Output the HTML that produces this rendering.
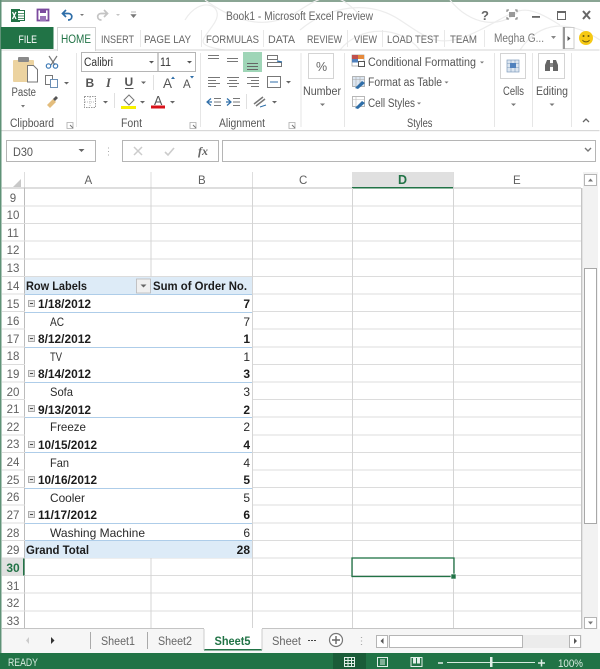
<!DOCTYPE html>
<html><head><meta charset="utf-8"><style>
html,body{margin:0;padding:0;background:#fff;width:600px;height:669px;overflow:hidden}
svg{display:block;filter:blur(.3px)}
text{font-family:"Liberation Sans",sans-serif;font-size:11.5px;fill:#555}
.r{fill:#606060;font-size:11.5px}
.c{font-size:12px;fill:#2a2a2a}
.b{font-weight:bold;fill:#1c1c1c;font-size:12px}
.t{font-size:11px;fill:#666}
.s{font-size:11.5px;fill:#666}
.g{font-size:11.5px;fill:#555}
</style></head><body>
<svg width="600" height="669" viewBox="0 0 600 669" xmlns="http://www.w3.org/2000/svg">
<rect width="600" height="669" fill="#fff"/>
<!-- window border -->
<rect x="0" y="0" width="600" height="2" fill="#8aa594"/>
<rect x="0" y="0" width="1.5" height="669" fill="#5f9277"/>
<!-- swirl decoration -->
<g fill="none" stroke="#ececec" stroke-width="1.2">
<path d="M185 20C200 -5 225 5 215 22S190 45 225 50"/>
<path d="M205 0C240 25 270 30 300 10S340 -5 360 15"/>
<path d="M300 30C330 5 370 0 400 20S440 50 480 30S520 0 560 25"/>
<path d="M340 50C360 25 400 25 420 50"/>
<path d="M450 0C470 25 500 30 520 10"/>
<path d="M520 50C540 20 570 20 600 40"/>
</g>
<!-- QAT -->
<rect x="11" y="9" width="9" height="13" fill="#217346"/>
<rect x="17.500" y="10.500" width="7" height="10" fill="#fff" stroke="#217346"/>
<path d="M12.500 12l3.500 7M16 12l-3.500 7" stroke="#fff" stroke-width="1.300"/>
<path d="M18 13.500h6M18 16h6M18 18.500h6" stroke="#217346" stroke-width=".8"/>
<rect x="37.500" y="9.500" width="11" height="11" fill="#fff" stroke="#7b4a9e" stroke-width="1.800"/>
<rect x="40" y="9" width="6" height="4" fill="#7b4a9e"/>
<rect x="40" y="16" width="6" height="5" fill="#9a73b8"/>
<path d="M66 10l-3.500 3.500 3.500 3.500M62.500 13.500h6c4.500 0 4.500 6.500 -.5 6.500" fill="none" stroke="#2f6ea8" stroke-width="1.700"/>
<path d="M80 14h4l-2 2z" fill="#777"/>
<path d="M104 10l3.500 3.500-3.500 3.500M107 13.500h-6c-4.500 0-4.500 6.500 .5 6.500" fill="none" stroke="#c4c4c4" stroke-width="1.700"/>
<path d="M116 14h4l-2 2z" fill="#c4c4c4"/>
<path d="M131 12h5M131 14.500h5l-2.500 3z" fill="#777" stroke="#777" stroke-width=".6"/>
<text x="226" y="20" textLength="147" lengthAdjust="spacingAndGlyphs" style="font-size:11.5px;fill:#666">Book1 - Microsoft Excel Preview</text>
<!-- window controls -->
<text x="481" y="20" style="font-size:13px;font-weight:bold;fill:#666">?</text>
<path d="M507 12v-2h2M515 10h2v2M517 17v2h-2M509 19h-2v-2" fill="none" stroke="#777"/><rect x="509" y="12" width="6" height="5" fill="#999"/>
<rect x="532" y="16" width="8" height="1.800" fill="#666"/>
<rect x="557.500" y="11.500" width="8" height="8" fill="#fff" stroke="#666"/><rect x="557" y="11" width="9" height="2" fill="#666"/>
<path d="M583 11l7 8M590 11l-7 8" stroke="#666" stroke-width="2"/>
<!-- tabs -->
<rect x="1" y="27" width="52.500" height="22" fill="#217346"/>
<text x="18.500" y="43" textLength="18.500" lengthAdjust="spacingAndGlyphs" style="fill:#fff;font-size:11px">FILE</text>
<rect x="57.500" y="27.500" width="38" height="23" fill="#fff" stroke="#d4d4d4"/>
<text x="61" y="43" textLength="30" lengthAdjust="spacingAndGlyphs" style="fill:#217346;font-size:11.500px">HOME</text>
<text x="101" y="43" textLength="33" lengthAdjust="spacingAndGlyphs" class="t">INSERT</text>
<text x="144" y="43" textLength="47" lengthAdjust="spacingAndGlyphs" class="t">PAGE LAY</text>
<text x="206" y="43" textLength="53" lengthAdjust="spacingAndGlyphs" class="t">FORMULAS</text>
<text x="268" y="43" textLength="27" lengthAdjust="spacingAndGlyphs" class="t">DATA</text>
<text x="307" y="43" textLength="35" lengthAdjust="spacingAndGlyphs" class="t">REVIEW</text>
<text x="354" y="43" textLength="23" lengthAdjust="spacingAndGlyphs" class="t">VIEW</text>
<text x="387" y="43" textLength="52" lengthAdjust="spacingAndGlyphs" class="t">LOAD TEST</text>
<text x="450" y="43" textLength="27" lengthAdjust="spacingAndGlyphs" class="t">TEAM</text>
<text x="494" y="42" textLength="50" lengthAdjust="spacingAndGlyphs" style="font-size:11.5px;fill:#777">Megha G...</text>
<path d="M140.500 30v17M201.500 30v17M263.500 30v17M347.500 30v17M382.500 30v17M444.500 30v17M484.500 30v17" stroke="#e8e8e8"/>
<path d="M551 36h5l-2.500 3z" fill="#888"/>
<rect x="563" y="27.500" width="11" height="21" fill="#fff" stroke="#ccc"/><rect x="563" y="27" width="2" height="22" fill="#999"/>
<path d="M567.500 36l3 2.500-3 2.500z" fill="#555"/>
<circle cx="586" cy="38" r="7" fill="#f6c915"/><circle cx="583.500" cy="36" r="1" fill="#6b5a10"/><circle cx="588.500" cy="36" r="1" fill="#6b5a10"/><path d="M582.500 40c1.500 2.500 5.500 2.500 7 0" fill="none" stroke="#6b5a10" stroke-width=".9"/>
<rect x="1.500" y="49.500" width="598" height="1" fill="#d4d4d4"/>
<rect x="58" y="49" width="37" height="2" fill="#fff"/>
<!-- ribbon separators -->
<path d="M76.500 53v74M200.500 53v74M301 53v74M344.500 53v74M494.500 53v74M532.500 53v74M571.500 53v74" stroke="#e6e6e6"/>
<rect x="1.500" y="130" width="598" height="1.200" fill="#d8d8d8"/>
<!-- Clipboard -->
<rect x="13" y="60" width="21" height="22" fill="#ecd3a0" rx="1"/>
<rect x="18" y="57" width="11" height="5" fill="#8a8a8a" rx="1"/>
<path d="M27.500 65.500h6l4 4v12.500h-10z" fill="#fff" stroke="#777"/>
<text x="11.500" y="96" textLength="24.500" lengthAdjust="spacingAndGlyphs" class="g">Paste</text>
<path d="M21 105h4l-2 2.500z" fill="#777"/>
<path d="M49 56l6 9M57 56l-6 9" stroke="#777" stroke-width="1.200"/><circle cx="48.500" cy="66" r="2.200" fill="none" stroke="#3d7ab5" stroke-width="1.200"/><circle cx="55.500" cy="66" r="2.200" fill="none" stroke="#3d7ab5" stroke-width="1.200"/>
<rect x="45.500" y="75.500" width="7" height="9" fill="#fff" stroke="#777"/><rect x="50.500" y="79.500" width="7" height="8" fill="#fff" stroke="#6b8fb5"/>
<path d="M64 82h5l-2.500 2.500z" fill="#666"/>
<path d="M47 105l6-6 3 3-6 6z" fill="#e3bd7d"/><path d="M53 99l3-3 2 2-3 3z" fill="#555"/>
<text x="10" y="127" textLength="44" lengthAdjust="spacingAndGlyphs" class="g">Clipboard</text>
<path d="M67 122.500h6v6h-6z" fill="none" stroke="#aaa" stroke-width=".8"/><path d="M70 125l3 3" stroke="#777"/>
<!-- Font -->
<rect x="81.500" y="52.500" width="114" height="19" fill="#fff" stroke="#b5b5b5"/>
<path d="M158 53v18" stroke="#999"/>
<text x="84" y="66" textLength="29" lengthAdjust="spacingAndGlyphs" style="font-size:11.5px;fill:#333">Calibri</text>
<path d="M149 61h5l-2.500 2.500z" fill="#555"/>
<text x="160" y="66" textLength="11" lengthAdjust="spacingAndGlyphs" style="font-size:12px;fill:#333">11</text>
<path d="M187 61h5l-2.500 2.500z" fill="#555"/>
<text x="85.500" y="87" style="font-size:12px;font-weight:bold;fill:#555">B</text>
<text x="106" y="87" style="font-size:12.500px;font-style:italic;font-weight:bold;fill:#555;font-family:'Liberation Serif',serif">I</text>
<text x="124.500" y="86" style="font-size:12px;font-weight:bold;fill:#555">U</text><rect x="125" y="88" width="8.500" height="1" fill="#555"/>
<path d="M141 81.500h5l-2.500 2.500z" fill="#666"/>
<path d="M153.500 75v15" stroke="#e0e0e0"/>
<text x="163" y="88" style="font-size:13.500px;fill:#555">A</text><path d="M171 79l2-2.500 2 2.500z" fill="#2f6ea8"/>
<text x="183" y="88" style="font-size:11.500px;fill:#555">A</text><path d="M190 76l2 2.500 2-2.500z" fill="#2f6ea8"/>
<rect x="84.500" y="96.500" width="11" height="11" fill="none" stroke="#999" stroke-dasharray="1.500 1"/><path d="M90 97v10M85 102h10" stroke="#bbb" stroke-dasharray="1 1"/>
<path d="M103 101h5l-2.500 2.500z" fill="#666"/>
<path d="M114.500 93v15" stroke="#e0e0e0"/>
<path d="M124 100l5-5 5 5-5 5z" fill="#fff" stroke="#777"/><rect x="121" y="106" width="15" height="3" fill="#f7f000"/>
<path d="M140 101h5l-2.500 2.500z" fill="#666"/>
<text x="154" y="105" style="font-size:12.500px;fill:#555">A</text><rect x="151" y="105.500" width="14" height="3" fill="#d8121a"/>
<path d="M170 101h5l-2.500 2.500z" fill="#666"/>
<text x="121" y="127" textLength="21" lengthAdjust="spacingAndGlyphs" class="g">Font</text>
<path d="M190 122.500h6v6h-6z" fill="none" stroke="#aaa" stroke-width=".8"/><path d="M193 125l3 3" stroke="#777"/>
<!-- Alignment -->
<path d="M208 55.500h11M208 58.500h11" stroke="#777"/>
<path d="M227 58.500h11M227 61.500h11" stroke="#777"/>
<rect x="243" y="52" width="19" height="20" fill="#9fd5b7"/>
<path d="M247 63.500h11M247 66.500h11M247 69.500h11" stroke="#666"/>
<rect x="267.500" y="55.500" width="10" height="4" fill="#fff" stroke="#777"/><rect x="267.500" y="62.500" width="14" height="4" fill="#fff" stroke="#777"/><path d="M277 61l5 1" stroke="#2f6ea8" stroke-width="1.300"/>
<path d="M208 77.500h12M208 80.500h8M208 83.500h12M208 86.500h8" stroke="#777"/>
<path d="M227 77.500h12M229 80.500h8M227 83.500h12M229 86.500h8" stroke="#777"/>
<path d="M247 77.500h12M251 80.500h8M247 83.500h12M251 86.500h8" stroke="#777"/>
<rect x="267.500" y="76.500" width="13" height="11" fill="#fff" stroke="#777"/><path d="M270 82h8" stroke="#2f6ea8"/>
<path d="M286 81h5l-2.500 2.500z" fill="#666"/>
<path d="M211 98.500l-4 3.500 4 3.500M207 102h5" fill="none" stroke="#2f6ea8" stroke-width="1.200"/><path d="M214 98.500h7M214 102h7M214 105.500h7" stroke="#777"/>
<path d="M227 98.500l4 3.500-4 3.500M231 102h-5" fill="none" stroke="#2f6ea8" stroke-width="1.200"/><path d="M233 98.500h7M233 102h7M233 105.500h7" stroke="#777"/>
<path d="M246.500 94v15" stroke="#e0e0e0"/>
<path d="M254 104l9-7M256 106l9-7" stroke="#777" stroke-width="1.500"/><path d="M260 107l6-2" stroke="#2f6ea8"/>
<path d="M272 101h5l-2.500 2.500z" fill="#666"/>
<text x="219" y="127" textLength="46" lengthAdjust="spacingAndGlyphs" class="g">Alignment</text>
<path d="M289 122.500h6v6h-6z" fill="none" stroke="#aaa" stroke-width=".8"/><path d="M292 125l3 3" stroke="#777"/>
<!-- Number -->
<rect x="308.500" y="53.500" width="25" height="25" fill="#fff" stroke="#d4d4d4"/>
<text x="316" y="71" style="font-size:12.500px;fill:#666">%</text>
<text x="303" y="95" textLength="38" lengthAdjust="spacingAndGlyphs" class="g">Number</text>
<path d="M320 103.500h5l-2.500 2.500z" fill="#777"/>
<!-- Styles -->
<rect x="352" y="55" width="12" height="11" fill="#fff" stroke="#999" stroke-width=".7"/><rect x="352" y="55" width="6" height="4" fill="#c0504d"/><rect x="358" y="55" width="6" height="4" fill="#e68a3c"/><rect x="352" y="59" width="6" height="3.500" fill="#4f81bd"/><rect x="358.500" y="61.500" width="6" height="5" fill="#fff" stroke="#555"/>
<text x="368" y="66" textLength="108" lengthAdjust="spacingAndGlyphs" class="g">Conditional Formatting</text>
<path d="M480 61.500h4l-2 2z" fill="#777"/>
<rect x="352.500" y="76.500" width="12" height="10" fill="#dce6f1" stroke="#999" stroke-width=".7"/><path d="M352 79.500h13M356 77v9M360 77v9" stroke="#aaa" stroke-width=".6"/><path d="M355 88l7-7 3 2-7 6z" fill="#2f6ea8"/>
<text x="368" y="86" textLength="74" lengthAdjust="spacingAndGlyphs" class="g">Format as Table</text>
<path d="M444.500 81.500h4l-2 2z" fill="#777"/>
<rect x="352.500" y="96.500" width="12" height="10" fill="#fff" stroke="#999" stroke-width=".7"/><path d="M352 99.500h13M356 97v9" stroke="#bbb" stroke-width=".6"/><path d="M355 108l7-7 3 2-7 6z" fill="#2f6ea8"/>
<text x="368" y="107" textLength="47" lengthAdjust="spacingAndGlyphs" class="g">Cell Styles</text>
<path d="M417 102.500h4l-2 2z" fill="#777"/>
<text x="407" y="127" textLength="25.500" lengthAdjust="spacingAndGlyphs" class="g">Styles</text>
<!-- Cells -->
<rect x="500.500" y="53.500" width="25" height="25" fill="#fff" stroke="#d4d4d4"/>
<rect x="507" y="60" width="12" height="12" fill="#dce6f1" stroke="#7f9cbc" stroke-width=".7"/><path d="M507 63.500h12M507 67.500h12M511 60v12M515 60v12" stroke="#7f9cbc" stroke-width=".6"/><rect x="510" y="63" width="6" height="5" fill="#4f81bd"/>
<text x="503" y="95" textLength="21" lengthAdjust="spacingAndGlyphs" class="g">Cells</text>
<path d="M511 103.500h5l-2.500 2.500z" fill="#777"/>
<!-- Editing -->
<rect x="538.500" y="53.500" width="26" height="25" fill="#fff" stroke="#d4d4d4"/>
<path d="M545 71v-6l2-5h3v11zM553 71v-11h3l2 5v6z" fill="#666"/><rect x="550" y="63" width="3" height="4" fill="#888"/>
<text x="536" y="95" textLength="32" lengthAdjust="spacingAndGlyphs" class="g">Editing</text>
<path d="M549.500 103.500h5l-2.500 2.500z" fill="#777"/>
<path d="M583 122l3-3 3 3" fill="none" stroke="#666" stroke-width="1.300"/>
<!-- formula bar -->
<rect x="6.500" y="140.500" width="89" height="21" fill="#fff" stroke="#b5b5b5"/>
<text x="13" y="156" textLength="20" lengthAdjust="spacingAndGlyphs" style="font-size:11.5px;fill:#555">D30</text>
<path d="M78.500 149h6l-3 3z" fill="#666"/>
<path d="M108.500 147.500v1M108.500 151v1M108.500 154.500v1" stroke="#aaa"/>
<rect x="122.500" y="140.500" width="96" height="21" fill="#fff" stroke="#b5b5b5"/>
<path d="M134 147l8 8M142 147l-8 8" stroke="#ccc" stroke-width="1.500"/>
<path d="M165 152l3 3 6-7" fill="none" stroke="#ccc" stroke-width="1.600"/>
<text x="198" y="155" style="font-size:12px;font-style:italic;font-weight:bold;fill:#666;font-family:'Liberation Serif',serif">fx</text>
<rect x="222.500" y="140.500" width="373" height="21" fill="#fff" stroke="#b5b5b5"/>
<path d="M585 148l3 3 3-3" fill="none" stroke="#777" stroke-width="1.400"/>
<!-- grid header -->
<rect x="352" y="172" width="101.500" height="16" fill="#e0e0e0"/>
<rect x="352" y="187" width="101.500" height="1.500" fill="#217346"/>
<path d="M24.500 172v16M151 172v16M252.500 172v16M453.500 172v16" stroke="#dedede"/>
<path d="M13 187l8-8v8z" fill="#c8c8c8"/>
<rect x="2" y="187.500" width="350" height="1" fill="#bcbcbc"/><rect x="453" y="187.500" width="128" height="1" fill="#bcbcbc"/>
<text x="84.500" y="184" class="r">A</text>
<text x="198" y="184" class="r">B</text>
<text x="299" y="184" class="r">C</text>
<text x="398" y="184" style="font-size:12.500px;font-weight:bold;fill:#217346">D</text>
<text x="513" y="184" class="r">E</text>
<rect x="24" y="188" width="1" height="441" fill="#bcbcbc"/>
<!-- row lines -->
<g stroke="#dcdcdc" stroke-width="1">
<path d="M2 206h579M2 223.500h579M2 241h579M2 259h579M2 276.500h579M2 294h579M2 311.500h579M2 329h579M2 347h579M2 364.500h579M2 382h579M2 399.500h579M2 417h579M2 435h579M2 452.500h579M2 470h579M2 487.500h579M2 505h579M2 523h579M2 540.500h579M2 558h579M2 575.500h579M2 593h579M2 611h579"/>
<path d="M151 188v89M151 558v71M252.500 188v441M352.500 188v441M453.500 188v441" stroke="#d4d4d4"/>
</g>
<rect x="581" y="188" width="1.500" height="441" fill="#c4c4c4"/>
<rect x="2" y="628" width="580" height="1" fill="#c4c4c4"/>
<!-- pivot -->
<rect x="25" y="277" width="227" height="264" fill="#fff"/>
<rect x="25" y="277" width="227" height="17" fill="#ddebf7"/>
<rect x="25" y="541" width="227" height="17" fill="#ddebf7"/>
<g fill="#aecde9">
<rect x="25" y="294" width="227" height="1"/><rect x="25" y="312" width="227" height="1"/><rect x="25" y="347" width="227" height="1"/><rect x="25" y="382" width="227" height="1"/><rect x="25" y="417" width="227" height="1"/><rect x="25" y="452" width="227" height="1"/><rect x="25" y="488" width="227" height="1"/><rect x="25" y="523" width="227" height="1"/><rect x="25" y="540" width="227" height="1"/>
</g>
<rect x="136.500" y="279" width="14" height="14" fill="#f0f0f0" stroke="#b8b8b8" stroke-width=".8"/>
<path d="M140.500 284.500h6l-3 3z" fill="#666"/>
<text x="26" y="290" textLength="61" lengthAdjust="spacingAndGlyphs" class="b">Row Labels</text>
<text x="153" y="290" textLength="94" lengthAdjust="spacingAndGlyphs" class="b">Sum of Order No.</text>
<g fill="#e8e8e8" stroke="#999" stroke-width=".8">
<rect x="28.500" y="300.500" width="6" height="6"/><rect x="28.500" y="335.500" width="6" height="6"/><rect x="28.500" y="370.500" width="6" height="6"/><rect x="28.500" y="405.500" width="6" height="6"/><rect x="28.500" y="441.500" width="6" height="6"/><rect x="28.500" y="476.500" width="6" height="6"/><rect x="28.500" y="511.500" width="6" height="6"/>
</g>
<path d="M30 303.500h3M30 338.500h3M30 373.500h3M30 408.500h3M30 444.500h3M30 479.500h3M30 514.500h3" stroke="#444"/>
<text x="38" y="308" textLength="53" lengthAdjust="spacingAndGlyphs" class="b">1/18/2012</text>
<text x="50" y="326" textLength="14" lengthAdjust="spacingAndGlyphs" class="c">AC</text>
<text x="38" y="343" textLength="53" lengthAdjust="spacingAndGlyphs" class="b">8/12/2012</text>
<text x="50" y="361" textLength="12" lengthAdjust="spacingAndGlyphs" class="c">TV</text>
<text x="38" y="378" textLength="53" lengthAdjust="spacingAndGlyphs" class="b">8/14/2012</text>
<text x="50" y="396" textLength="23" lengthAdjust="spacingAndGlyphs" class="c">Sofa</text>
<text x="38" y="414" textLength="53" lengthAdjust="spacingAndGlyphs" class="b">9/13/2012</text>
<text x="50" y="431" textLength="36" lengthAdjust="spacingAndGlyphs" class="c">Freeze</text>
<text x="38" y="449" textLength="59" lengthAdjust="spacingAndGlyphs" class="b">10/15/2012</text>
<text x="50" y="467" textLength="19" lengthAdjust="spacingAndGlyphs" class="c">Fan</text>
<text x="38" y="484" textLength="59" lengthAdjust="spacingAndGlyphs" class="b">10/16/2012</text>
<text x="50" y="502" textLength="35" lengthAdjust="spacingAndGlyphs" class="c">Cooler</text>
<text x="38" y="519" textLength="59" lengthAdjust="spacingAndGlyphs" class="b">11/17/2012</text>
<text x="50" y="537" textLength="95" lengthAdjust="spacingAndGlyphs" class="c">Washing Machine</text>
<text x="26" y="554" textLength="63" lengthAdjust="spacingAndGlyphs" class="b">Grand Total</text>
<g text-anchor="end">
<text x="250" y="308" class="b">7</text><text x="250" y="326" class="c">7</text>
<text x="250" y="343" class="b">1</text><text x="250" y="361" class="c">1</text>
<text x="250" y="378" class="b">3</text><text x="250" y="396" class="c">3</text>
<text x="250" y="414" class="b">2</text><text x="250" y="431" class="c">2</text>
<text x="250" y="449" class="b">4</text><text x="250" y="467" class="c">4</text>
<text x="250" y="484" class="b">5</text><text x="250" y="502" class="c">5</text>
<text x="250" y="519" class="b">6</text><text x="250" y="537" class="c">6</text>
<text x="250" y="554" class="b">28</text>
</g>
<!-- row numbers -->
<g text-anchor="middle">
<text x="13" y="202" class="r">9</text><text x="13" y="219" class="r">10</text><text x="13" y="237" class="r">11</text><text x="13" y="254" class="r">12</text><text x="13" y="272" class="r">13</text>
<text x="13" y="290" class="r">14</text><text x="13" y="308" class="r">15</text><text x="13" y="325" class="r">16</text><text x="13" y="343" class="r">17</text><text x="13" y="360" class="r">18</text>
<text x="13" y="378" class="r">19</text><text x="13" y="396" class="r">20</text><text x="13" y="413" class="r">21</text><text x="13" y="431" class="r">22</text><text x="13" y="448" class="r">23</text>
<text x="13" y="466" class="r">24</text><text x="13" y="484" class="r">25</text><text x="13" y="501" class="r">26</text><text x="13" y="519" class="r">27</text><text x="13" y="537" class="r">28</text>
<text x="13" y="554" class="r">29</text>
<rect x="2" y="558.500" width="22" height="17" fill="#e0e0e0"/><rect x="23" y="558.500" width="1.500" height="17" fill="#217346"/>
<text x="13" y="572" style="font-size:12px;font-weight:bold;fill:#217346">30</text>
<text x="13" y="590" class="r">31</text><text x="13" y="607" class="r">32</text><text x="13" y="625" class="r">33</text>
</g>
<!-- selected cell -->
<rect x="352" y="558" width="102" height="18.500" fill="none" stroke="#217346" stroke-width="1.300"/>
<rect x="451" y="574" width="5" height="5" fill="#217346" stroke="#fff" stroke-width=".6"/>
<!-- vertical scrollbar -->
<rect x="583" y="172" width="15" height="457" fill="#f2f2f2"/>
<rect x="584.500" y="174.500" width="12" height="11" fill="#fff" stroke="#b5b5b5"/><path d="M588 181.500h5l-2.500-3z" fill="#777"/>
<rect x="584.500" y="268.500" width="12" height="255" fill="#fff" stroke="#a8a8a8"/>
<rect x="584.500" y="617.500" width="12" height="11" fill="#fff" stroke="#b5b5b5"/><path d="M588 621.500h5l-2.500 3z" fill="#777"/>
<!-- sheet tabs -->
<rect x="2" y="629" width="598" height="24" fill="#f6f6f6"/>
<path d="M29 637v7l-3-3.500z" fill="#ccc"/>
<path d="M51 637v7l3.500-3.500z" fill="#333"/>
<path d="M90.500 632v17M147.500 632v17" stroke="#aaa"/>
<text x="101" y="645" textLength="34" lengthAdjust="spacingAndGlyphs" class="s">Sheet1</text>
<text x="158" y="645" textLength="34" lengthAdjust="spacingAndGlyphs" class="s">Sheet2</text>
<rect x="204" y="628" width="58" height="22" fill="#fff"/><rect x="204" y="649" width="58" height="1.500" fill="#217346"/>
<path d="M204 629v21M262 629v21" stroke="#ccc"/>
<text x="214.500" y="645" textLength="36" lengthAdjust="spacingAndGlyphs" style="font-size:12px;font-weight:bold;fill:#217346">Sheet5</text>
<text x="272" y="645" textLength="29" lengthAdjust="spacingAndGlyphs" class="s">Sheet</text>
<path d="M308 640.500h2M311 640.500h2M314 640.500h2" stroke="#444"/>
<circle cx="336" cy="640" r="6.500" fill="#fff" stroke="#777" stroke-width="1.200"/><path d="M336 636v8M332 640h8" stroke="#666" stroke-width="1.400"/>
<path d="M361.500 637v1M361.500 640.500v1M361.500 644v1" stroke="#aaa" stroke-width="1.200"/>
<rect x="376" y="635" width="206" height="13" fill="#ececec"/>
<rect x="376.500" y="635.500" width="11" height="12" fill="#fff" stroke="#b5b5b5"/><path d="M383.500 638v6l-3-3z" fill="#555"/>
<rect x="389.500" y="635.500" width="133" height="12" fill="#fff" stroke="#b5b5b5"/>
<rect x="569.500" y="635.500" width="11" height="12" fill="#fff" stroke="#b5b5b5"/><path d="M574 638v6l3-3z" fill="#555"/>
<!-- status bar -->
<rect x="0" y="653" width="600" height="16" fill="#217346"/>
<text x="8" y="666" textLength="30" lengthAdjust="spacingAndGlyphs" style="font-size:11px;fill:#d8ebe0">READY</text>
<rect x="333" y="653" width="33" height="16" fill="#1a5c38"/>
<g fill="none" stroke="#e2efe8">
<rect x="344.500" y="657.500" width="10" height="9"/><path d="M344.500 660.500h10M344.500 663.500h10M348 657.500v9M351.500 657.500v9"/>
<rect x="377.500" y="657.500" width="10" height="9"/><path d="M380 660h5M380 662h5M380 664h5"/>
</g>
<rect x="411" y="657.500" width="11" height="9" fill="none" stroke="#e2efe8"/><rect x="413" y="657.500" width="3" height="6" fill="#e2efe8"/><rect x="417" y="657.500" width="3" height="6" fill="#e2efe8"/>
<path d="M438 663h5" stroke="#e2efe8" stroke-width="1.500"/>
<path d="M447 662.500h88" stroke="#d8ebe0"/>
<rect x="490" y="657" width="2.500" height="10" fill="#e2efe8"/>
<path d="M538 663h7M541.500 659.500v7" stroke="#e2efe8" stroke-width="1.500"/>
<text x="558" y="667" textLength="25" lengthAdjust="spacingAndGlyphs" style="font-size:11px;fill:#d8ebe0">100%</text>
</svg>
</body></html>
